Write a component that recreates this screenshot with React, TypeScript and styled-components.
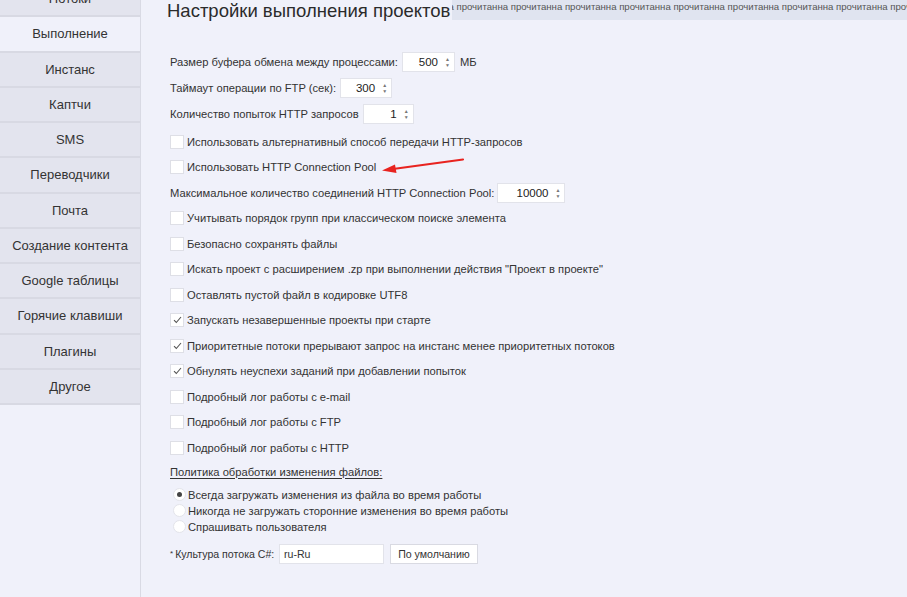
import React from "react";
import styled, { createGlobalStyle } from "styled-components";

const Global = createGlobalStyle`
  html, body { margin: 0; padding: 0; background: #f0f1fa; }
  body { font-family: "Liberation Sans", Arial, sans-serif; color: #333; }
  * { box-sizing: border-box; }
`;

const Page = styled.div`
  display: flex;
  width: 907px;
  height: 597px;
  overflow: hidden;
  background: #f0f1fa;
`;

const Sidebar = styled.nav`
  width: 141px;
  flex: none;
  border-right: 1px solid #d9dae4;
  display: flex;
  flex-direction: column;
  gap: 2px;
  margin-top: -18px;
  background: #f0f1fa;
`;

const NavItem = styled.div<{ $active?: boolean }>`
  height: 33.25px;
  flex: none;
  display: flex;
  align-items: center;
  justify-content: center;
  font-size: 13px;
  color: #333;
  background: ${(p) => (p.$active ? "#f0f1fa" : "#e3e4ee")};
  box-shadow: 0 2px 0 #d8d9e3;
`;

const Content = styled.main`
  flex: 1;
  position: relative;
  display: flex;
  flex-direction: column;
`;

const Header = styled.div`
  display: flex;
  align-items: flex-start;
  height: 49px;
`;

const Title = styled.h1`
  margin: 0 0 0 26px;
  font-weight: normal;
  font-size: 18.5px;
  line-height: 22px;
  color: #2b2b2b;
  white-space: nowrap;
`;

const Banner = styled.div`
  flex: 1;
  height: 20px;
  margin-left: 2px;
  background: #e0e4f0;
  overflow: hidden;
  white-space: nowrap;
  font-size: 9.6px;
  line-height: 14px;
  color: #555;
`;

const BannerText = styled.span`
  display: inline-block;
  margin-left: -4px;
`;

const Form = styled.div`
  display: flex;
  flex-direction: column;
  padding-left: 29px;
  font-size: 11.2px;
`;

const SpinRow = styled.div`
  height: 26px;
  display: flex;
  align-items: center;
  gap: 4px;
`;

const Label = styled.span`
  white-space: nowrap;
`;

const Spin = styled.div<{ $w: number }>`
  width: ${(p) => p.$w}px;
  height: 20px;
  background: #fff;
  border: 1px solid #e2e3ea;
  display: flex;
  align-items: center;
  justify-content: flex-end;
  padding-right: 4px;
  gap: 7px;
  font-size: 11.5px;
  color: #222;
`;

const SpinArrows = styled.span`
  display: flex;
  flex-direction: column;
  font-size: 5px;
  line-height: 6px;
  color: #777;
`;

const Unit = styled.span`
  margin-left: 1px;
`;

const CheckRow = styled.div<{ $first?: boolean }>`
  height: 25.5px;
  display: flex;
  align-items: center;
  gap: 3px;
  margin-top: ${(p) => (p.$first ? "2px" : "0")};
`;

const Box = styled.span`
  width: 14px;
  height: 14px;
  background: #fff;
  border: 1px solid #dedfe6;
  display: flex;
  align-items: center;
  justify-content: center;
  flex: none;
`;

const PolicyTitle = styled.div`
  height: 20px;
  display: flex;
  align-items: center;
  text-decoration: underline;
  text-underline-offset: 2px;
  margin-top: 1px;
`;

const Radios = styled.div`
  display: flex;
  flex-direction: column;
  margin-top: 5px;
  padding-left: 3px;
`;

const RadioRow = styled.div`
  height: 16px;
  display: flex;
  align-items: center;
  gap: 2px;
`;

const Circle = styled.span<{ $on?: boolean }>`
  width: 13px;
  height: 13px;
  border-radius: 50%;
  background: #fff;
  border: 1px solid #e3e4ea;
  display: flex;
  align-items: center;
  justify-content: center;
  flex: none;
  &::after {
    content: "";
    width: 5px;
    height: 5px;
    border-radius: 50%;
    background: ${(p) => (p.$on ? "#444" : "transparent")};
  }
`;

const CultureRow = styled.div`
  height: 20px;
  margin-top: 9px;
  display: flex;
  align-items: center;
  font-size: 10.6px;
`;

const CultureLabel = styled.span`
  width: 109px;
  flex: none;
  white-space: nowrap;
`;

const Star = styled.span`
  font-size: 8px;
  vertical-align: 2px;
  margin-right: 2px;
`;

const TextBox = styled.div`
  width: 105px;
  height: 20px;
  background: #fff;
  border: 1px solid #e2e3ea;
  padding-left: 4px;
  display: flex;
  align-items: center;
`;

const Button = styled.div`
  width: 88px;
  height: 20px;
  margin-left: 6px;
  background: #fff;
  border: 1px solid #d9dae2;
  display: flex;
  align-items: center;
  justify-content: center;
`;

const Arrow = styled.svg`
  position: absolute;
  left: 240px;
  top: 156px;
`;

const navItems = [
  "Потоки",
  "Выполнение",
  "Инстанс",
  "Каптчи",
  "SMS",
  "Переводчики",
  "Почта",
  "Создание контента",
  "Google таблицы",
  "Горячие клавиши",
  "Плагины",
  "Другое",
];

const checks: { text: string; on?: boolean; num?: [string, number] }[] = [
  { text: "Использовать альтернативный способ передачи HTTP-запросов" },
  { text: "Использовать HTTP Connection Pool" },
  { text: "Максимальное количество соединений HTTP Connection Pool:", num: ["10000", 68] },
  { text: "Учитывать порядок групп при классическом поиске элемента" },
  { text: "Безопасно сохранять файлы" },
  { text: 'Искать проект с расширением .zp при выполнении действия "Проект в проекте"' },
  { text: "Оставлять пустой файл в кодировке UTF8" },
  { text: "Запускать незавершенные проекты при старте", on: true },
  { text: "Приоритетные потоки прерывают запрос на инстанс менее приоритетных потоков", on: true },
  { text: "Обнулять неуспехи заданий при добавлении попыток", on: true },
  { text: "Подробный лог работы с e-mail" },
  { text: "Подробный лог работы с FTP" },
  { text: "Подробный лог работы с HTTP" },
];

const Check = () => (
  <svg width="9" height="8" viewBox="0 0 9 8">
    <path d="M1 4.2 L3.3 6.5 L8 1" fill="none" stroke="#555" strokeWidth="1.1" />
  </svg>
);

const SpinBox = ({ value, w }: { value: string; w: number }) => (
  <Spin $w={w}>
    {value}
    <SpinArrows>
      <span>▲</span>
      <span>▼</span>
    </SpinArrows>
  </Spin>
);

export default function App() {
  return (
    <>
      <Global />
      <Page>
        <Sidebar>
          {navItems.map((n) => (
            <NavItem key={n} $active={n === "Выполнение"}>
              {n}
            </NavItem>
          ))}
        </Sidebar>
        <Content>
          <Header>
            <Title>Настройки выполнения проектов</Title>
            <Banner>
              <BannerText>
                {"а " + Array(12).fill("прочитанна").join(" ")}
              </BannerText>
            </Banner>
          </Header>
          <Form>
            <SpinRow>
              <Label>Размер буфера обмена между процессами:</Label>
              <SpinBox value="500" w={53} />
              <Unit>МБ</Unit>
            </SpinRow>
            <SpinRow>
              <Label>Таймаут операции по FTP (сек):</Label>
              <SpinBox value="300" w={52} />
            </SpinRow>
            <SpinRow>
              <Label>Количество попыток HTTP запросов</Label>
              <SpinBox value="1" w={51} />
            </SpinRow>
            {checks.map((c, i) =>
              c.num ? (
                <CheckRow key={i}>
                  <Label>{c.text}</Label>
                  <SpinBox value={c.num[0]} w={c.num[1]} />
                </CheckRow>
              ) : (
                <CheckRow key={i} $first={i === 0}>
                  <Box>{c.on && <Check />}</Box>
                  <Label>{c.text}</Label>
                </CheckRow>
              )
            )}
            <PolicyTitle>Политика обработки изменения файлов:</PolicyTitle>
            <Radios>
              <RadioRow>
                <Circle $on />
                <Label>Всегда загружать изменения из файла во время работы</Label>
              </RadioRow>
              <RadioRow>
                <Circle />
                <Label>Никогда не загружать сторонние изменения во время работы</Label>
              </RadioRow>
              <RadioRow>
                <Circle />
                <Label>Спрашивать пользователя</Label>
              </RadioRow>
            </Radios>
            <CultureRow>
              <CultureLabel>
                <Star>*</Star>Культура потока C#:
              </CultureLabel>
              <TextBox>ru-Ru</TextBox>
              <Button>По умолчанию</Button>
            </CultureRow>
          </Form>
          <Arrow width="90" height="20" viewBox="0 0 90 20">
            <line x1="82" y1="3.5" x2="12" y2="13" stroke="#e8231f" strokeWidth="2.2" strokeLinecap="round" />
            <polygon points="1,14.5 14,8.5 15.5,17" fill="#e8231f" />
          </Arrow>
        </Content>
      </Page>
    </>
  );
}
